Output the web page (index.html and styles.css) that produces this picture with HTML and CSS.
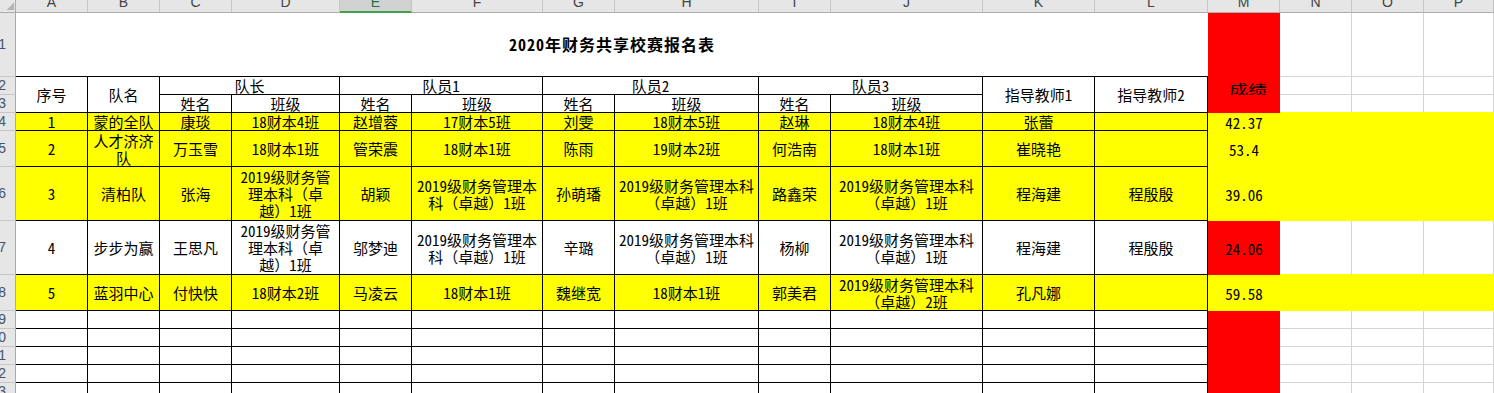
FILE: index.html
```html
<!DOCTYPE html>
<html lang="zh-CN">
<head>
<meta charset="utf-8">
<title>2020年财务共享校赛报名表</title>
<link rel="stylesheet" href="styles.css">
</head>
<body>
<div class="sheet">
  <!-- column headers -->
  <div class="cell corner"><i class="tri"></i></div>
  <div class="cell ch">A</div>
  <div class="cell ch">B</div>
  <div class="cell ch">C</div>
  <div class="cell ch">D</div>
  <div class="cell ch sel">E</div>
  <div class="cell ch">F</div>
  <div class="cell ch">G</div>
  <div class="cell ch">H</div>
  <div class="cell ch">I</div>
  <div class="cell ch">J</div>
  <div class="cell ch">K</div>
  <div class="cell ch">L</div>
  <div class="cell ch">M</div>
  <div class="cell ch">N</div>
  <div class="cell ch">O</div>
  <div class="cell ch">P</div>

  <!-- row 1 -->
  <div class="cell rh">1</div>
  <div class="cell title">2020年财务共享校赛报名表</div>
  <div class="cell r"></div>
  <div class="cell g"></div><div class="cell g"></div><div class="cell g"></div>

  <!-- row 2 -->
  <div class="cell rh">2</div>
  <div class="cell b rs2">序号</div>
  <div class="cell b rs2">队名</div>
  <div class="cell b cs2">队长</div>
  <div class="cell b cs2">队员1</div>
  <div class="cell b cs2">队员2</div>
  <div class="cell b cs2">队员3</div>
  <div class="cell b rs2">指导教师1</div>
  <div class="cell b rs2">指导教师2</div>
  <div class="cell r score-h"><span class="wide">成绩</span></div>
  <div class="cell g"></div><div class="cell g"></div><div class="cell g"></div>

  <!-- row 3 -->
  <div class="cell rh">3</div>
  <div class="cell b">姓名</div>
  <div class="cell b">班级</div>
  <div class="cell b">姓名</div>
  <div class="cell b">班级</div>
  <div class="cell b">姓名</div>
  <div class="cell b">班级</div>
  <div class="cell b">姓名</div>
  <div class="cell b">班级</div>
  <div class="cell r"></div>
  <div class="cell g gy"></div><div class="cell g gy"></div><div class="cell g gy"></div>

  <!-- row 4 -->
  <div class="cell rh">4</div>
  <div class="cell b y">1</div>
  <div class="cell b y">蒙的全队</div>
  <div class="cell b y">康琰</div>
  <div class="cell b y">18财本4班</div>
  <div class="cell b y">赵增蓉</div>
  <div class="cell b y">17财本5班</div>
  <div class="cell b y">刘雯</div>
  <div class="cell b y">18财本5班</div>
  <div class="cell b y">赵琳</div>
  <div class="cell b y">18财本4班</div>
  <div class="cell b y">张蕾</div>
  <div class="cell b y"></div>
  <div class="cell y num">42.37</div>
  <div class="cell y"></div><div class="cell y"></div><div class="cell y"></div>

  <!-- row 5 -->
  <div class="cell rh">5</div>
  <div class="cell b y">2</div>
  <div class="cell b y">人才济济队</div>
  <div class="cell b y">万玉雪</div>
  <div class="cell b y">18财本1班</div>
  <div class="cell b y">管荣震</div>
  <div class="cell b y">18财本1班</div>
  <div class="cell b y">陈雨</div>
  <div class="cell b y">19财本2班</div>
  <div class="cell b y">何浩南</div>
  <div class="cell b y">18财本1班</div>
  <div class="cell b y">崔晓艳</div>
  <div class="cell b y"></div>
  <div class="cell y num">53.4</div>
  <div class="cell y"></div><div class="cell y"></div><div class="cell y"></div>

  <!-- row 6 -->
  <div class="cell rh">6</div>
  <div class="cell b y">3</div>
  <div class="cell b y">清柏队</div>
  <div class="cell b y">张海</div>
  <div class="cell b y">2019级财务管理本科（卓越）1班</div>
  <div class="cell b y">胡颖</div>
  <div class="cell b y">2019级财务管理本科（卓越）1班</div>
  <div class="cell b y">孙萌璠</div>
  <div class="cell b y">2019级财务管理本科（卓越）1班</div>
  <div class="cell b y">路鑫荣</div>
  <div class="cell b y">2019级财务管理本科（卓越）1班</div>
  <div class="cell b y">程海建</div>
  <div class="cell b y">程殷殷</div>
  <div class="cell y num">39.06</div>
  <div class="cell y"></div><div class="cell y"></div><div class="cell y"></div>

  <!-- row 7 -->
  <div class="cell rh">7</div>
  <div class="cell b">4</div>
  <div class="cell b">步步为赢</div>
  <div class="cell b">王思凡</div>
  <div class="cell b">2019级财务管理本科（卓越）1班</div>
  <div class="cell b">邬梦迪</div>
  <div class="cell b">2019级财务管理本科（卓越）1班</div>
  <div class="cell b">辛璐</div>
  <div class="cell b">2019级财务管理本科（卓越）1班</div>
  <div class="cell b">杨柳</div>
  <div class="cell b">2019级财务管理本科（卓越）1班</div>
  <div class="cell b">程海建</div>
  <div class="cell b">程殷殷</div>
  <div class="cell r num">24.06</div>
  <div class="cell g gy"></div><div class="cell g gy"></div><div class="cell g gy"></div>

  <!-- row 8 -->
  <div class="cell rh">8</div>
  <div class="cell b y">5</div>
  <div class="cell b y">蓝羽中心</div>
  <div class="cell b y">付快快</div>
  <div class="cell b y">18财本2班</div>
  <div class="cell b y">马凌云</div>
  <div class="cell b y">18财本1班</div>
  <div class="cell b y">魏继宽</div>
  <div class="cell b y">18财本1班</div>
  <div class="cell b y">郭美君</div>
  <div class="cell b y">2019级财务管理本科（卓越）2班</div>
  <div class="cell b y">孔凡娜</div>
  <div class="cell b y"></div>
  <div class="cell y num">59.58</div>
  <div class="cell y"></div><div class="cell y"></div><div class="cell y"></div>

  <!-- rows 9-13 -->
  <div class="cell rh">9</div>
  <div class="cell b"></div><div class="cell b"></div><div class="cell b"></div><div class="cell b"></div><div class="cell b"></div><div class="cell b"></div>
  <div class="cell b"></div><div class="cell b"></div><div class="cell b"></div><div class="cell b"></div><div class="cell b"></div><div class="cell b"></div>
  <div class="cell r"></div>
  <div class="cell g"></div><div class="cell g"></div><div class="cell g"></div>

  <div class="cell rh">10</div>
  <div class="cell b"></div><div class="cell b"></div><div class="cell b"></div><div class="cell b"></div><div class="cell b"></div><div class="cell b"></div>
  <div class="cell b"></div><div class="cell b"></div><div class="cell b"></div><div class="cell b"></div><div class="cell b"></div><div class="cell b"></div>
  <div class="cell r"></div>
  <div class="cell g"></div><div class="cell g"></div><div class="cell g"></div>

  <div class="cell rh">11</div>
  <div class="cell b"></div><div class="cell b"></div><div class="cell b"></div><div class="cell b"></div><div class="cell b"></div><div class="cell b"></div>
  <div class="cell b"></div><div class="cell b"></div><div class="cell b"></div><div class="cell b"></div><div class="cell b"></div><div class="cell b"></div>
  <div class="cell r"></div>
  <div class="cell g"></div><div class="cell g"></div><div class="cell g"></div>

  <div class="cell rh">12</div>
  <div class="cell b"></div><div class="cell b"></div><div class="cell b"></div><div class="cell b"></div><div class="cell b"></div><div class="cell b"></div>
  <div class="cell b"></div><div class="cell b"></div><div class="cell b"></div><div class="cell b"></div><div class="cell b"></div><div class="cell b"></div>
  <div class="cell r"></div>
  <div class="cell g"></div><div class="cell g"></div><div class="cell g"></div>

  <div class="cell rh">13</div>
  <div class="cell b"></div><div class="cell b"></div><div class="cell b"></div><div class="cell b"></div><div class="cell b"></div><div class="cell b"></div>
  <div class="cell b"></div><div class="cell b"></div><div class="cell b"></div><div class="cell b"></div><div class="cell b"></div><div class="cell b"></div>
  <div class="cell r"></div>
  <div class="cell g"></div><div class="cell g"></div><div class="cell g"></div>
</div>
</body>
</html>
```

FILE: styles.css
```css
html, body {
  margin: 0;
  padding: 0;
  background: #ffffff;
}

body {
  overflow: hidden;
  font-family: "Noto Sans Mono CJK SC", "Noto Sans CJK SC", sans-serif;
  font-size: 15px;
  color: #000000;
  text-spacing-trim: space-all;
}

.sheet {
  display: grid;
  width: 1494px;
  grid-template-columns: 16px 72px 72px 72px 108px 72px 131px 72px 144px 72px 152px 112px 113px 72px 72px 72px 70px;
  grid-template-rows: 13px 64px 18px 18px 18px 36px 54px 54px 36px 18px 18px 18px 18px 18px;
}

.cell {
  box-sizing: border-box;
  display: flex;
  align-items: center;
  justify-content: center;
  text-align: center;
  padding: 0 2px;
  line-height: 17px;
  overflow: hidden;
  min-width: 0;
  min-height: 0;
  text-spacing-trim: space-all;
}

.rs2 { grid-row: span 2; }
.cs2 { grid-column: span 2; }

.b {
  border-right: 1px solid #000000;
  border-bottom: 1px solid #000000;
}

.g {
  border-right: 1px solid #d4d4d4;
  border-bottom: 1px solid #d4d4d4;
}

.gy { border-bottom-color: #ffff00; }

.y { background: #ffff00; }
.r { background: #ff0000; }

/* header strip */
.corner {
  background: #e6e6e6;
  border-right: 1px solid #ababab;
  border-bottom: 1px solid #ababab;
  justify-content: flex-end;
  align-items: flex-end;
  padding: 0 1px 2px 0;
}

.tri {
  display: block;
  width: 8px;
  height: 8px;
  background: linear-gradient(135deg, transparent 50%, #b4b4b4 50%);
}

.ch {
  background: #e6e6e6;
  border-right: 1px solid #c6c6c6;
  border-bottom: 1px solid #ababab;
  font-family: "Liberation Sans", Arial, sans-serif;
  font-size: 14px;
  line-height: 14px;
  color: #444444;
  align-items: flex-end;
  padding: 0 0 3px;
}

.ch.sel {
  background: #d2d2d2;
  border-bottom: 2px solid #3fa34d;
  color: #217346;
  padding-bottom: 2px;
}

.rh {
  background: #e6e6e6;
  border-right: 1px solid #ababab;
  border-bottom: 1px solid #c6c6c6;
  font-family: "Liberation Sans", Arial, sans-serif;
  font-size: 14px;
  color: #44546a;
  justify-content: flex-end;
  padding: 0 9px 0 0;
  white-space: nowrap;
}

.title {
  grid-column: span 12;
  border-bottom: 1px solid #000000;
  font-weight: bold;
  font-size: 16px;
  letter-spacing: 1px;
}

.score-h {
  padding: 4px 0 0 8px;
}

.wide {
  display: inline-block;
  font-size: 13px;
  line-height: 13px;
  transform: scaleX(1.45);
}

.num {
  font-family: "Noto Sans Mono CJK SC", "DejaVu Sans Mono", monospace;
  font-size: 15px;
}
```
